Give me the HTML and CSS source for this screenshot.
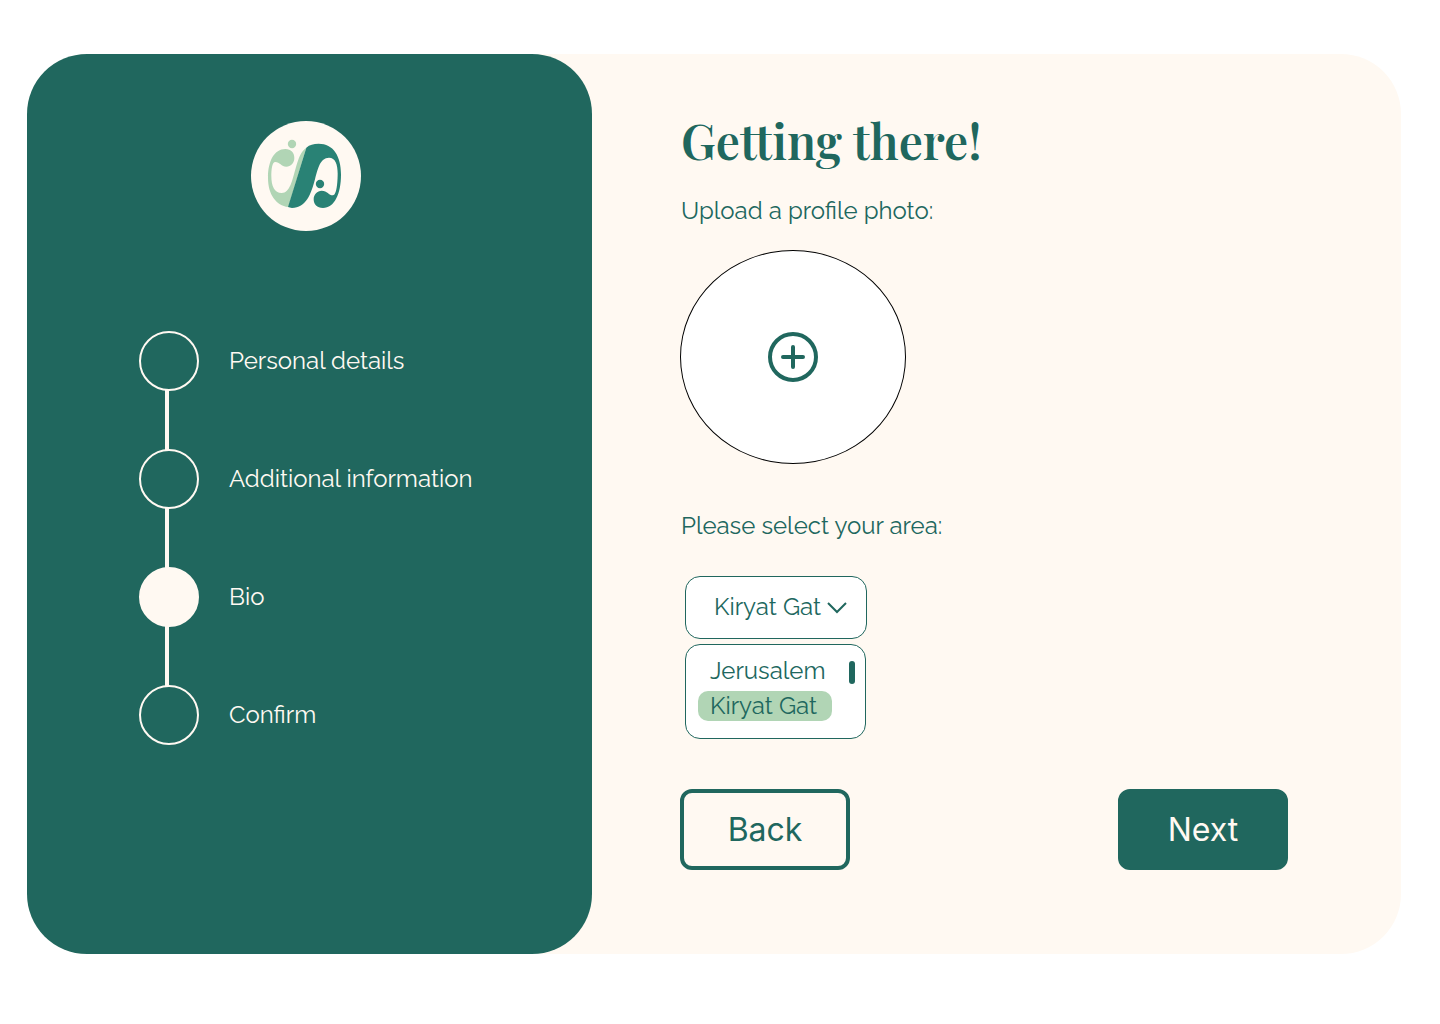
FILE: index.html
```html
<!DOCTYPE html>
<html lang="en">
<head>
    <meta charset="UTF-8">
    <meta name="viewport" content="width=device-width, initial-scale=1.0">
    <title>Sign up - Bio</title>
    <link rel="stylesheet" href="styles.css">
</head>
<body>
    <main class="card">
        <aside class="sidebar">
            <svg class="logo" viewBox="15 15 330 330" role="img" aria-label="Logo">
                <circle cx="180" cy="180" r="165" fill="#fff9f2"/>
                <g fill="#b1d5b5">
                    <circle cx="138" cy="84" r="12.5"/>
                    <path d="M181 95 L127 273 C90 268 66 235 66 185 C66 135 85 99 118 99 C135 99 145 110 145 126 C145 142 134 152 121 152 C106 152 101 138 88 138 C78 138 76 162 76 180 C76 210 85 231 107 231 C132 231 139 192 150 153 C158 125 165 106 181 95 Z"/>
                </g>
                <g fill="#298275">
                    <circle cx="222" cy="204" r="12.5"/>
                    <path d="M181 95 C191 86 202 83 218 83 C262 83 285 120 285 175 C285 235 265 276 231 276 C213 276 203 265 203 250 C203 235 214 224 227 224 C244 224 248 238 261 238 C272 238 275 200 275 172 C275 145 268 125 249 125 C222 125 215 160 207 190 C195 235 180 276 138 276 Q131 275 126 273 Z"/>
                </g>
            </svg>

            <ol class="steps">
                <li class="step">Personal details</li>
                <li class="step">Additional information</li>
                <li class="step current" aria-current="step">Bio</li>
                <li class="step">Confirm</li>
            </ol>
        </aside>

        <form class="content">
            <h1>Getting there!</h1>

            <label class="field-label" for="photo">Upload a profile photo:</label>
            <div class="upload">
                <input type="file" id="photo" accept="image/*">
                <svg class="plus" viewBox="0 0 50 50" aria-hidden="true">
                    <circle cx="25" cy="25" r="23"/>
                    <path d="M25 15v20M15 25h20"/>
                </svg>
            </div>

            <label class="field-label area-label" for="area">Please select your area:</label>
            <div class="area">
                <div class="select">
                    <select id="area">
                        <option>Jerusalem</option>
                        <option selected>Kiryat Gat</option>
                    </select>
                    <svg class="chevron" viewBox="0 0 20 12" aria-hidden="true">
                        <path d="M1 1l9 9 9-9"/>
                    </svg>
                </div>
                <div class="menu">
                    <ul class="options" role="listbox" aria-label="Area">
                        <li class="option" role="option" aria-selected="false">Jerusalem</li>
                        <li class="option selected" role="option" aria-selected="true">Kiryat Gat</li>
                    </ul>
                    <span class="scroll-thumb"></span>
                </div>
            </div>

            <div class="buttons">
                <button type="button" class="btn back">Back</button>
                <button type="submit" class="btn next">Next</button>
            </div>
        </form>
    </main>
</body>
</html>
```
FILE: styles.css
```css
*,
*::before,
*::after {
    box-sizing: border-box;
}

body {
    margin: 54px 39px 70px 27px;
    background-color: #fff;
    color: #20675e;
    font-family: Raleway, Lato, sans-serif;
    font-size: 24px;
    font-weight: 400;
    line-height: 30px;
}

.card {
    display: grid;
    grid-template-columns: 565fr 809fr;
    min-height: 900px;
    background-color: #fff9f2;
    border-radius: 60px;
}

/* left panel */
.sidebar {
    padding: 67px 64px 64px 112px;
    background-color: #20675e;
    border-radius: 60px;
    color: #fff9f2;
}

.logo {
    display: block;
    width: 110px;
    height: 110px;
    margin-left: 112px;
}

.steps {
    display: flex;
    flex-direction: column;
    gap: 58px;
    margin: 100px 0 0;
    padding: 0;
    list-style: none;
}

.step {
    position: relative;
    display: flex;
    align-items: center;
    gap: 30px;
}

.step::before {
    content: "";
    width: 60px;
    height: 60px;
    border: 2px solid #fff9f2;
    border-radius: 50%;
}

.step.current::before {
    background-color: #fff9f2;
}

/* line down to the next circle */
.step:not(:last-child)::after {
    content: "";
    position: absolute;
    top: 59px;
    left: 26px;
    width: 4px;
    height: 60px;
    background-color: #fff9f2;
}

/* right panel */
.content {
    padding: 58px 113px 64px 88px;
}

h1 {
    margin: 0 0 28px;
    padding-left: 1px;
    font-family: "Playfair Display", "Liberation Serif", serif;
    font-size: 48px;
    font-weight: 600;
    line-height: 56px;
}

.field-label {
    display: block;
    padding-left: 1px;
}

.upload {
    position: relative;
    display: flex;
    align-items: center;
    justify-content: center;
    width: 226px;
    height: 214px;
    margin-top: 24px;
    background-color: #fff;
    border: 1px solid #000;
    border-radius: 50%;
}

.upload input {
    position: absolute;
    inset: 0;
    width: 100%;
    opacity: 0;
    cursor: pointer;
}

.plus {
    width: 50px;
    height: 50px;
    fill: none;
    stroke: #20675e;
    stroke-width: 4;
    stroke-linecap: round;
}

.area-label {
    margin-top: 47px;
}

.area {
    width: 182px;
    margin: 35px 0 0 5px;
}

.select {
    position: relative;
}

.select select {
    display: block;
    width: 100%;
    height: 63px;
    padding: 0 40px 2px 28px;
    appearance: none;
    background-color: #fff;
    border: 1px solid #20675e;
    border-radius: 15px;
    color: #20675e;
    font: inherit;
}

.chevron {
    position: absolute;
    top: 26px;
    right: 20px;
    width: 20px;
    height: 12px;
    fill: none;
    stroke: #20675e;
    stroke-width: 2;
    pointer-events: none;
}

.menu {
    display: flex;
    justify-content: space-between;
    height: 95px;
    margin: 5px 1px 0 0;
    padding: 11px 10px 11px 12px;
    background-color: #fff;
    border: 1px solid #20675e;
    border-radius: 15px;
}

.options {
    display: flex;
    flex-direction: column;
    gap: 5px;
    margin: 0;
    padding: 0;
    list-style: none;
}

.option {
    width: 134px;
    padding-left: 12px;
    border-radius: 10px;
}

.option.selected {
    background-color: #b1d5b5;
}

.scroll-thumb {
    width: 6px;
    height: 23px;
    margin-top: 5px;
    background-color: #20675e;
    border-radius: 3px;
}

.buttons {
    display: flex;
    justify-content: space-between;
    margin-top: 50px;
}

.btn {
    width: 170px;
    height: 81px;
    border: 4px solid #20675e;
    border-radius: 12px;
    font-family: Inter, sans-serif;
    font-size: 32px;
    font-weight: 400;
    cursor: pointer;
}

.back {
    background-color: transparent;
    color: #20675e;
}

.next {
    background-color: #20675e;
    color: #fff9f2;
}
```
